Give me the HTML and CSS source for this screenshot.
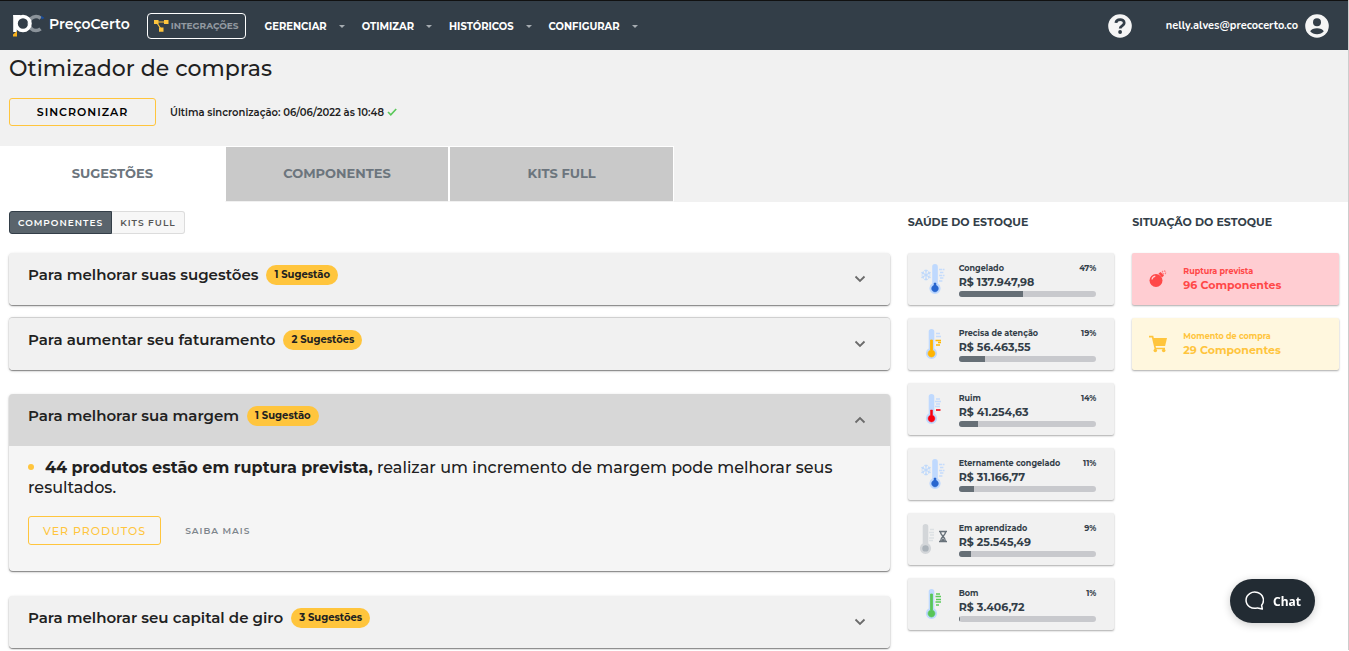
FILE: index.html
```html
<!DOCTYPE html>
<html lang="pt-BR">
<head>
<meta charset="utf-8">
<meta name="viewport" content="width=device-width, initial-scale=1">
<title>Otimizador de compras</title>
<link rel="stylesheet" href="styles.css">
</head>
<body>
<svg class="defs" aria-hidden="true">
  <symbol id="snow" viewBox="0 0 10 12"><path d="M5 .5v11M.4 3.2l9.2 5.6M9.6 3.2L.4 8.8M3.4 1.2L5 2.6l1.6-1.4M3.4 10.8L5 9.4l1.6 1.4M.6 5.2l1.8-.8L2.2 2.4M9.4 5.2l-1.8-.8.2-2M.6 6.8l1.8.8-.2 2M9.4 6.8l-1.8.8.2 2" fill="none" stroke="#bfd9fb" stroke-width="1.100"/></symbol>
  <symbol id="tube" viewBox="0 0 12 32"><path d="M3.200 3.800a2.800 2.800 0 0 1 5.600 0V20.500a5.600 5.600 0 1 1-5.600 0z" fill="currentColor"/></symbol>
  <symbol id="frozen" viewBox="0 0 28 32">
    <use href="#snow" x="2" y="6" width="10" height="12"/>
    <use href="#tube" x="10" y="0" width="12" height="32" color="#bfd9fe"/>
    <path d="M15 20h2v2.300a3.400 3.400 0 1 1-2 0z" fill="#2866cf" stroke="#2866cf" stroke-width=".5"/>
    <path d="M20 6.500h5.500M21 9.500h4M20 12.500h5.500M21 15h4M20 18h4" stroke="#c5dcfc" stroke-width="1.600" stroke-dasharray="3 .6"/>
  </symbol>
  <symbol id="chevron" viewBox="0 0 12 8"><path d="M1.500 1.500L6 6l4.500-4.500" fill="none" stroke="#6b6b6b" stroke-width="1.800"/></symbol>
</svg>

<header class="topbar">
  <a class="brand" href="#">
    <svg class="brand-mark" viewBox="0 0 32 24" aria-hidden="true">
      <circle cx="23" cy="9.500" r="7" fill="none" stroke="#8b939a" stroke-width="3.600" stroke-dasharray="32 12" stroke-dashoffset="-6"/>
      <path d="M2 1v17" stroke="#fff" stroke-width="3.600"/>
      <circle cx="10" cy="9.500" r="7" fill="none" stroke="#fff" stroke-width="3.600"/>
      <path d="M.2 1H8L2 7z" fill="#fff"/>
      <path d="M0 22.500v-2l4-3.500v5.500z" fill="#f9b11c"/>
      <path d="M28 1.500l3.500 2.500-3 1.500z" fill="#174da0"/>
    </svg>
    <span>PreçoCerto</span>
  </a>
  <button class="integrations" type="button">
    <svg viewBox="0 0 15 12" aria-hidden="true"><path d="M0 0h4.500v4H0zM10 0h4.500v4H10zM5 7.500h4.500v4.200H5z" fill="#ffc53d"/><path d="M3 2h8M3 3l4 6" stroke="#ffc53d" stroke-width="1.200"/></svg>
    INTEGRAÇÕES
  </button>
  <nav class="menu">
    <button type="button">GERENCIAR</button>
    <button type="button">OTIMIZAR</button>
    <button type="button">HISTÓRICOS</button>
    <button type="button">CONFIGURAR</button>
  </nav>
  <button class="round" type="button" aria-label="Ajuda">
    <svg viewBox="0 0 24 24" aria-hidden="true"><circle cx="12" cy="12" r="11.800" fill="#f5f5f5"/><path d="M7.900 8.800C8.300 4.600 16.200 4.300 16.200 8.900c0 3.100-4 2.700-4 5.600" fill="none" stroke="#333e48" stroke-width="2.800"/><circle cx="12.100" cy="18" r="1.900" fill="#333e48"/></svg>
  </button>
  <a class="account" href="#">nelly.alves@precocerto.co
    <svg viewBox="0 0 24 24" aria-hidden="true"><circle cx="12" cy="12" r="11.800" fill="#f5f5f5"/><circle cx="12" cy="8.300" r="4" fill="#333e48"/><path d="M5.200 17.300C7 13.200 17 13.200 18.800 17.300 16 21.300 8 21.300 5.200 17.300z" fill="#333e48"/></svg>
  </a>
</header>

<section class="intro">
  <h1>Otimizador de compras</h1>
  <div class="sync">
    <button class="sync-button" type="button">SINCRONIZAR</button>
    <p>Última sincronização: 06/06/2022 às 10:48
      <svg viewBox="0 0 10 8" aria-hidden="true"><path d="M1 4l2.800 2.800L9.200 1" fill="none" stroke="#5ac85a" stroke-width="1.600"/></svg>
    </p>
  </div>
  <div class="tabs" role="tablist">
    <button class="tab selected" type="button" role="tab" aria-selected="true">SUGESTÕES</button>
    <button class="tab" type="button" role="tab" aria-selected="false">COMPONENTES</button>
    <button class="tab" type="button" role="tab" aria-selected="false">KITS FULL</button>
  </div>
</section>

<main class="columns">
  <section class="column">
    <div class="column-head">
      <div class="toggle">
        <button class="active" type="button">COMPONENTES</button>
        <button type="button">KITS FULL</button>
      </div>
    </div>
    <div class="panels">
      <article class="panel">
        <button class="panel-head" type="button" aria-expanded="false"><span class="panel-title">Para melhorar suas sugestões</span><span class="pill">1 Sugestão</span><svg class="chevron" aria-hidden="true"><use href="#chevron"/></svg></button>
      </article>
      <article class="panel ruled">
        <button class="panel-head" type="button" aria-expanded="false"><span class="panel-title">Para aumentar seu faturamento</span><span class="pill">2 Sugestões</span><svg class="chevron" aria-hidden="true"><use href="#chevron"/></svg></button>
      </article>
      <article class="panel open">
        <button class="panel-head" type="button" aria-expanded="true"><span class="panel-title">Para melhorar sua margem</span><span class="pill">1 Sugestão</span><svg class="chevron" aria-hidden="true"><use href="#chevron"/></svg></button>
        <div class="panel-body">
          <p><span class="dot"></span><strong>44 produtos estão em ruptura prevista,</strong> realizar um incremento de margem pode melhorar seus resultados.</p>
          <div class="actions">
            <button class="see" type="button">VER PRODUTOS</button>
            <a href="#">SAIBA MAIS</a>
          </div>
        </div>
      </article>
      <article class="panel">
        <button class="panel-head" type="button" aria-expanded="false"><span class="panel-title">Para melhorar seu capital de giro</span><span class="pill">3 Sugestões</span><svg class="chevron" aria-hidden="true"><use href="#chevron"/></svg></button>
      </article>
    </div>
  </section>

  <section class="column">
    <h2 class="column-head">SAÚDE DO ESTOQUE</h2>
    <div class="cards">
      <article class="card">
        <svg class="card-icon" aria-hidden="true"><use href="#frozen"/></svg>
        <div class="card-text"><div class="label"><span>Congelado</span><span>47%</span></div><strong>R$ 137.947,98</strong><div class="bar"><div style="width:47%"></div></div></div>
      </article>
      <article class="card">
        <svg class="card-icon" viewBox="0 0 28 32" aria-hidden="true">
          <use href="#tube" x="6.500" y="0" width="12" height="32" color="#bfd9fe"/>
          <path d="M11.500 12h2v10.300a3.400 3.400 0 1 1-2 0z" fill="#ffb400" stroke="#ffb400" stroke-width=".8"/>
          <path d="M17 5.500h4M17 8.500h5" stroke="#c5dcfc" stroke-width="1.600"/><path d="M16.500 12.500h5.500M19 14.500h3M17 17h4" stroke="#ffb900" stroke-width="1.600"/>
        </svg>
        <div class="card-text"><div class="label"><span>Precisa de atenção</span><span>19%</span></div><strong>R$ 56.463,55</strong><div class="bar"><div style="width:19%"></div></div></div>
      </article>
      <article class="card">
        <svg class="card-icon" viewBox="0 0 28 32" aria-hidden="true">
          <use href="#tube" x="6.500" y="0" width="12" height="32" color="#bfd9fe"/>
          <path d="M11.500 17h2v5.300a3.400 3.400 0 1 1-2 0z" fill="#f8000f" stroke="#f8000f" stroke-width=".5"/>
          <path d="M17 6h4M16 8.500h6M17 11h4M16 13.500h5" stroke="#c5dcfc" stroke-width="1.600"/><path d="M17 17h4.500" stroke="#f8000f" stroke-width="1.600"/>
        </svg>
        <div class="card-text"><div class="label"><span>Ruim</span><span>14%</span></div><strong>R$ 41.254,63</strong><div class="bar"><div style="width:14%"></div></div></div>
      </article>
      <article class="card">
        <svg class="card-icon" aria-hidden="true"><use href="#frozen"/></svg>
        <div class="card-text"><div class="label"><span>Eternamente congelado</span><span>11%</span></div><strong>R$ 31.166,77</strong><div class="bar"><div style="width:11%"></div></div></div>
      </article>
      <article class="card">
        <svg class="card-icon" viewBox="0 0 28 32" aria-hidden="true">
          <use href="#tube" x=".5" y="0" width="12" height="32" color="#d3d6d9"/>
          <circle cx="6.500" cy="25.400" r="3.200" fill="#abb3ba"/>
          <path d="M11 6.500h4M10 9.500h5M11 12h4M10 15h5M10 17.500h4" stroke="#dde1e4" stroke-width="1.300"/>
          <path d="M20 8.500h8M20 18.500h8M21.500 9c0 4 4.800 4 4.800 9M26.500 9c0 4-4.800 4-4.800 9" fill="none" stroke="#68727a" stroke-width="1.500"/><path d="M22 18l2-3 2 3z" fill="#68727a"/>
        </svg>
        <div class="card-text"><div class="label"><span>Em aprendizado</span><span>9%</span></div><strong>R$ 25.545,49</strong><div class="bar"><div style="width:9%"></div></div></div>
      </article>
      <article class="card">
        <svg class="card-icon" viewBox="0 0 28 32" aria-hidden="true">
          <use href="#tube" x="6.500" y="0" width="12" height="32" color="#bfd9fe"/>
          <path d="M11.500 6h2v16.300a3.400 3.400 0 1 1-2 0z" fill="#58c558" stroke="#58c558" stroke-width=".8"/>
          <path d="M17 6h4M16.500 8.500h5.500M17 11.500h5M16.500 14h5.500M17 17h3" stroke="#5ccb5c" stroke-width="1.700"/>
        </svg>
        <div class="card-text"><div class="label"><span>Bom</span><span>1%</span></div><strong>R$ 3.406,72</strong><div class="bar"><div style="width:1%"></div></div></div>
      </article>
    </div>
  </section>

  <section class="column">
    <h2 class="column-head">SITUAÇÃO DO ESTOQUE</h2>
    <div class="cards">
      <article class="card danger">
        <svg class="card-icon" viewBox="0 0 28 32" aria-hidden="true"><circle cx="13" cy="17.500" r="6.500" fill="#ff4848"/><path d="M15.500 10.500l2-1.500 3.500 3.500-2 2z" fill="#ff4848"/><path d="M9 16.500c.3-2 1.500-3 3.300-3.300" fill="none" stroke="#ffcdd2" stroke-width="1.200"/><circle cx="21" cy="9.500" r="1.700" fill="none" stroke="#ff7a7d" stroke-width="1.200" stroke-dasharray="1.500 .9"/></svg>
        <div class="card-text"><div class="label">Ruptura prevista</div><strong>96 Componentes</strong></div>
      </article>
      <article class="card warning">
        <svg class="card-icon" viewBox="0 0 28 32" aria-hidden="true"><path d="M6 8.700h3.600L12.300 20.500H22" fill="none" stroke="#ffc53d" stroke-width="1.700"/><path d="M9.800 10H24l-1.900 8H11.600z" fill="#ffc53d"/><circle cx="12.300" cy="22.500" r="1.800" fill="#ffc53d"/><circle cx="20.700" cy="22.500" r="1.800" fill="#ffc53d"/></svg>
        <div class="card-text"><div class="label">Momento de compra</div><strong>29 Componentes</strong></div>
      </article>
    </div>
  </section>
</main>

<button class="chat" type="button">
  <svg viewBox="0 0 20 20" aria-hidden="true"><path d="M17.600 14.200A8.700 8.100 0 1 0 13.500 16.900L18.300 18z" fill="none" stroke="#fff" stroke-width="1.500" stroke-linejoin="round"/></svg>
  Chat
</button>
</body>
</html>
```
FILE: styles.css
```css
* { box-sizing: border-box; }
body {
  margin: 0;
  border-right: 1px solid #cdcdcd;
  background: #fff;
  color: #212121;
  font-family: Montserrat, Inter, sans-serif;
  font-size: 10px;
}
button { margin: 0; padding: 0; border: 0; background: none; color: inherit; font: inherit; cursor: pointer; }
a { color: inherit; text-decoration: none; }
h1, h2, p { margin: 0; }
svg { display: block; flex: none; }
.defs { position: absolute; width: 0; height: 0; }

.topbar {
  display: flex;
  align-items: center;
  height: 50px;
  padding: 0 19px 0 13px;
  border-top: 1px solid #111;
  background: #333e48;
  color: #fff;
  font-weight: 700;
}
.brand { display: flex; align-items: center; gap: 4px; font-size: 14px; line-height: 20px; font-weight: 600; }
.brand span { padding-bottom: 4px; }
.brand-mark { width: 32px; height: 24px; }
.integrations {
  display: flex;
  align-items: center;
  gap: 2px;
  height: 26px;
  margin-left: 17px;
  padding: 0 6px;
  border: 1px solid #fff;
  border-radius: 4px;
  color: #9299a0;
  font-size: 9px;
}
.integrations svg { width: 15px; height: 12px; }
.menu { display: flex; gap: 17px; margin-left: 19px; margin-right: auto; padding-top: 2px; }
.menu button { display: flex; align-items: center; gap: 12px; font-size: 10px; }
.menu button::after { content: ""; border: 3px solid transparent; border-top-color: #a6acb1; border-bottom: 0; }
.round svg, .account svg { width: 24px; height: 24px; }
.account { display: flex; align-items: center; gap: 7px; margin-left: 34px; font-family: Nunito, "Open Sans", sans-serif; font-size: 11px; }

.intro { background: #f1f1f1; }
.intro h1 { padding: 5px 9px 0; font-size: 22px; line-height: 28px; font-weight: 500; }
.sync { display: flex; align-items: center; gap: 14px; padding: 15px 9px 20px; }
.sync-button {
  width: 147px;
  height: 28px;
  border: 1px solid #ffc53d;
  border-radius: 3px;
  color: #000;
  font-size: 11px;
  font-weight: 600;
  letter-spacing: 1px;
}
.sync p { display: flex; align-items: center; gap: 3px; font-size: 10px; font-weight: 600; }
.sync p svg { width: 10px; height: 8px; }
.tabs { display: grid; grid-template-columns: repeat(6, 1fr); height: 56px; }
.tab {
  padding-bottom: 2px;
  border: 1px solid #fff;
  border-bottom-color: #f1f1f1;
  background: #c9c9c9;
  color: #6c757d;
  font-size: 13px;
  font-weight: 700;
}
.tab.selected { border-color: #fff; background: #fff; }

.columns { display: grid; grid-template-columns: 4fr 1fr 1fr; padding-bottom: 2px; }
.column { min-width: 0; padding: 0 9px; }
.column-head { height: 51px; margin: 0; padding-top: 9px; color: #333e48; font-size: 11px; line-height: 22px; font-weight: 700; }
.toggle { display: flex; }
.toggle button {
  height: 23px;
  padding: 0 8px;
  border: 1px solid #dcdcdc;
  border-left: 0;
  border-radius: 0 3px 3px 0;
  background: #f7f7f7;
  color: #555;
  font-size: 9px;
  font-weight: 600;
  letter-spacing: 1px;
}
.toggle .active { border: 1px solid #333e48; border-radius: 3px 0 0 3px; background: #5a646c; color: #fff; }

.panels { display: flex; flex-direction: column; }
.panel {
  overflow: hidden;
  margin-bottom: 12px;
  border-radius: 4px;
  background: #f5f5f5;
  box-shadow: 0 1px 1px #888, 0 1px 3px #ccc;
}
.panel.ruled { border-top: 1px solid #d0d0d0; }
.panel.open { margin: 12px 0 25px; }
.panel:last-child { margin-bottom: 0; }
.panel-head {
  display: flex;
  align-items: flex-start;
  width: 100%;
  height: 52px;
  padding: 12px 24px 0 19px;
  background: #f1f1f1;
  text-align: left;
}
.open .panel-head { background: #d7d7d7; }
.panel-title { font-size: 15px; line-height: 20px; font-weight: 600; }
.pill { margin-left: 8px; padding: 0 8px; border-radius: 10px; background: #ffc53d; font-size: 10px; line-height: 20px; font-weight: 700; }
.chevron { width: 12px; height: 8px; margin: 10px 0 0 auto; }
.open .chevron { transform: rotate(180deg); }
.panel-body { padding: 12px 19px 26px; }
.panel-body p { font-size: 16px; line-height: 20px; font-weight: 500; }
.panel-body strong { font-weight: 700; }
.dot { display: inline-block; width: 6px; height: 6px; margin-right: 11px; border-radius: 50%; background: #ffc53d; vertical-align: 3px; }
.actions { display: flex; align-items: center; gap: 24px; margin-top: 18px; color: #7d858c; }
.actions a { font-size: 9px; font-weight: 600; letter-spacing: 1px; }
.see { height: 29px; padding: 0 14px; border: 1px solid #ffc53d; border-radius: 3px; color: #ffc53d; font-size: 11px; font-weight: 500; letter-spacing: 1px; }

.cards { display: flex; flex-direction: column; gap: 13px; }
.card {
  display: flex;
  align-items: center;
  gap: 12px;
  height: 52px;
  padding: 0 18px 0 11px;
  border-radius: 2px;
  background: #f1f1f1;
  box-shadow: 0 1px 2px #aaa;
  color: #333e48;
}
.card-icon { width: 28px; height: 32px; }
.card-text { flex: 1; min-width: 0; }
.card strong { display: block; font-size: 11px; line-height: 15px; font-weight: 700; }
.label { display: flex; justify-content: space-between; font-size: 8px; line-height: 13px; font-weight: 700; white-space: nowrap; }
.bar { overflow: hidden; height: 6px; margin-top: 1px; border-radius: 3px; background: #c8c9cd; }
.bar div { height: 100%; background: #666f76; }
.danger { background: #ffcdd2; color: #ff4848; }
.warning { background: #fff7de; color: #ffc53d; }

.chat {
  position: fixed;
  right: 34px;
  bottom: 28px;
  display: flex;
  align-items: center;
  justify-content: center;
  gap: 9px;
  width: 85px;
  height: 44px;
  border-radius: 22px;
  background: #222b33;
  box-shadow: 0 2px 8px #0003;
  color: #fff;
  font-family: "Noto Sans", sans-serif;
  font-size: 12px;
  font-weight: 700;
}
.chat svg { width: 20px; height: 20px; }
```
